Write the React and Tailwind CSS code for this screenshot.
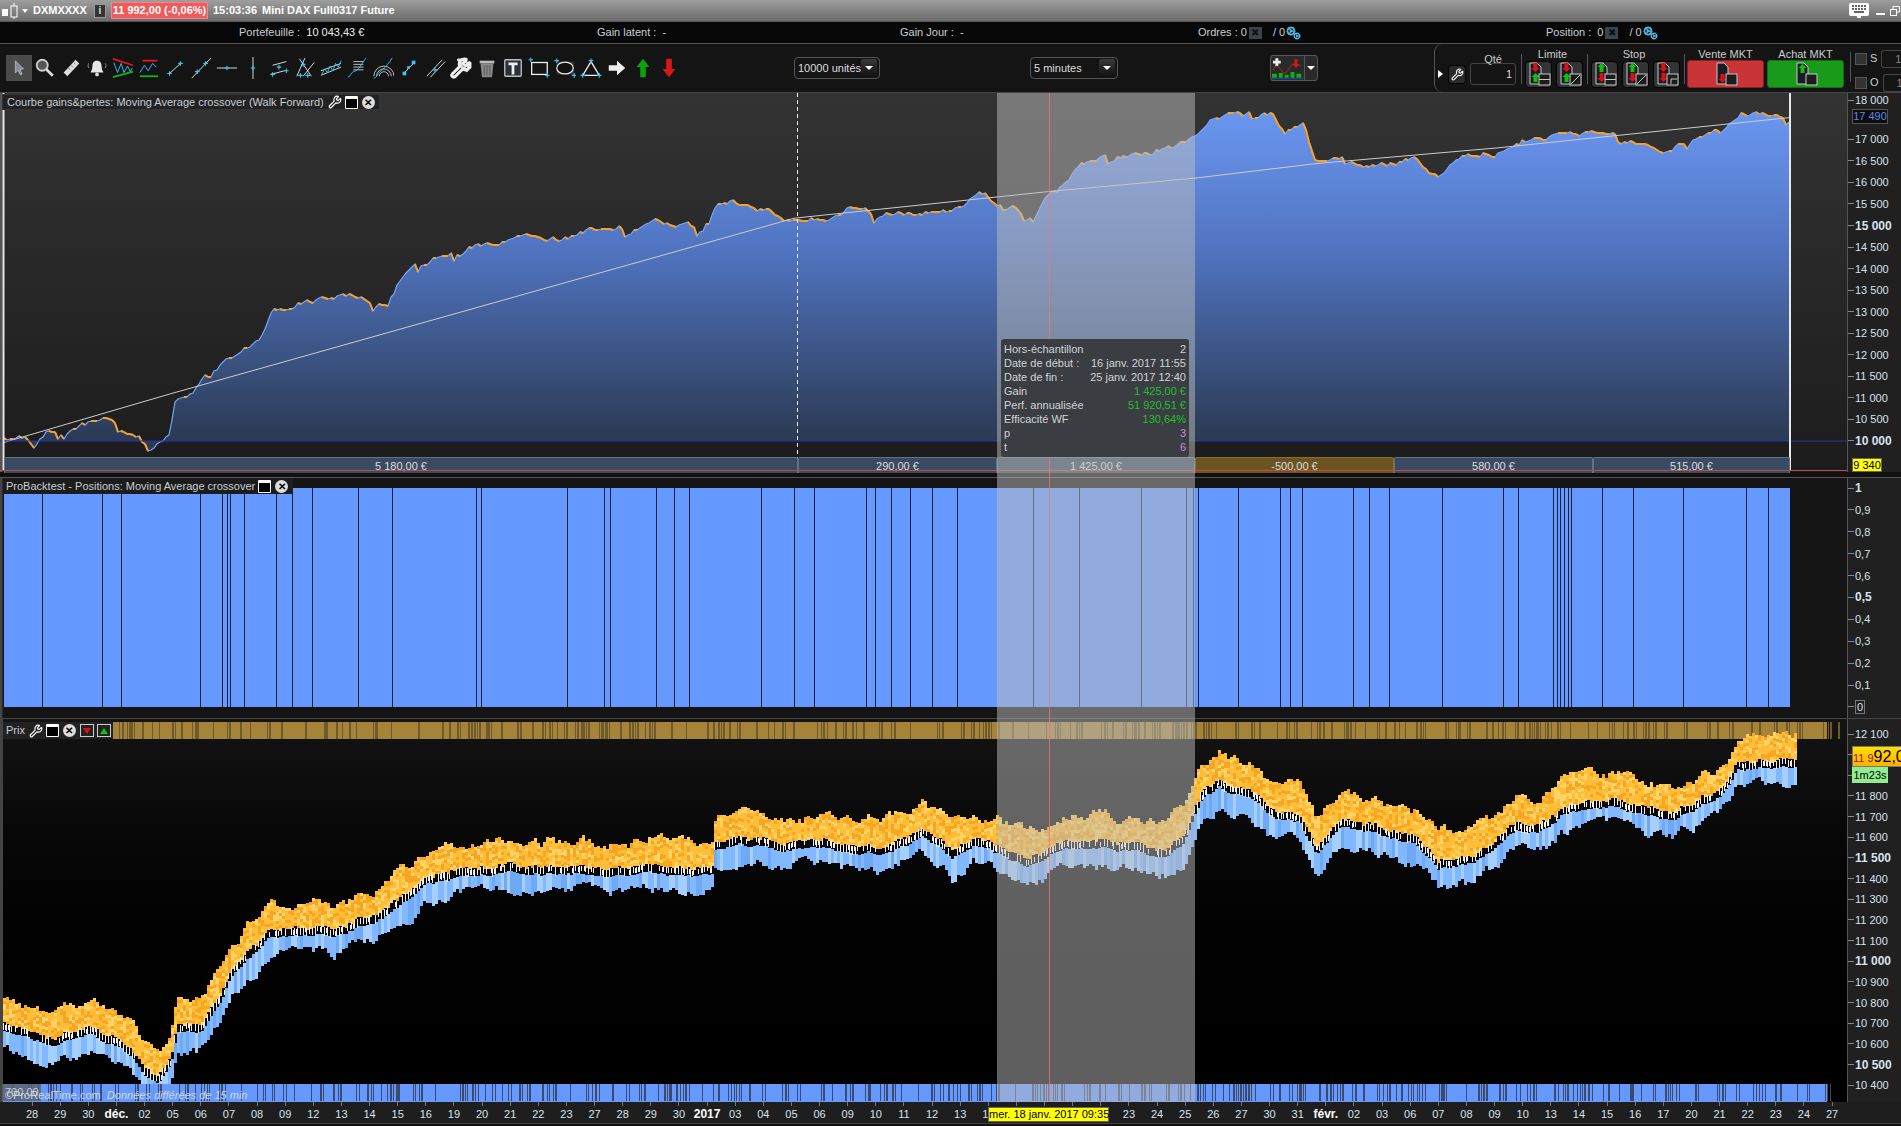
import { Wrench, Hammer, Cog } from "lucide-react";

// points below are read off the picture at 1568px wide, s scales them to the real window
const s = 1901 / 1568;

const rand = (seed) => () => {
  seed = (seed + 0x6d2b79f5) | 0;
  let t = Math.imul(seed ^ (seed >>> 15), 1 | seed);
  t = (t + Math.imul(t ^ (t >>> 7), 61 | t)) ^ t;
  return ((t ^ (t >>> 14)) >>> 0) / 4294967296;
};

const interp = (pts, x) => {
  for (let i = 1; i < pts.length; i++) {
    if (x <= pts[i][0]) {
      const [x0, y0] = pts[i - 1];
      const [x1, y1] = pts[i];
      return y0 + ((y1 - y0) * (x - x0)) / (x1 - x0 || 1);
    }
  }
  return pts[pts.length - 1][1];
};

const equityPts = [[3,363],[20,360],[28,372],[40,358],[60,352],[90,344],[100,348],[110,356],[125,363],[140,358],[145,330],[160,322],[175,303],[195,290],[215,280],[225,256],[250,250],[285,242],[320,249],[330,230],[350,215],[375,207],[400,202],[430,195],[470,196],[480,192],[510,186],[550,185],[580,188],[590,170],[605,163],[620,172],[650,180],[680,180],[700,172],[720,178],[760,175],[790,172],[810,160],[825,168],[840,170],[845,182],[860,165],[875,150],[900,130],[940,128],[985,115],[1000,100],[1020,95],[1050,94],[1060,108],[1075,100],[1085,132],[1110,128],[1125,138],[1165,130],[1185,146],[1205,130],[1235,125],[1255,115],[1300,113],[1325,108],[1375,124],[1395,115],[1420,110],[1435,95],[1475,97]];
const trendPts = [[3,365],[140,325],[655,180],[865,158],[985,147],[1085,135],[1235,122],[1476,97]];
const pricePts = [[3,845],[15,850],[30,852],[45,858],[60,850],[75,846],[90,855],[105,865],[120,880],[130,888],[140,875],[145,845],[165,845],[180,825],[190,800],[205,785],[220,770],[250,765],[275,765],[290,760],[310,752],[330,740],[350,722],[380,718],[420,712],[460,716],[500,716],[540,716],[588,716],[589,695],[610,692],[650,695],[680,692],[700,698],[730,698],[760,685],[785,702],[805,690],[825,700],[845,710],[870,695],[900,692],[935,695],[960,700],[975,690],[990,655],[1005,645],[1030,655],[1050,670],[1070,672],[1085,700],[1105,675],[1130,680],[1165,690],[1185,712],[1215,705],[1250,680],[1270,680],[1290,665],[1330,660],[1380,672],[1400,660],[1420,650],[1432,628],[1480,626]];
const positionLines = [35,84,100,165,183,187,190,201,228,241,257,295,323,393,397,468,498,503,541,556,568,628,655,671,714,722,735,751,769,789,852,890,941,978,984,988,1021,1056,1064,1074,1116,1129,1146,1189,1240,1252,1281,1284,1287,1290,1293,1296,1321,1347,1388,1440,1458];

const equity = (() => {
  const r = rand(7);
  let n = 0;
  const out = [];
  for (let x = 4; x <= 1790; x += 3) {
    n = n * 0.75 + (r() - 0.5) * 5;
    if (r() < 0.04) n += 7;
    out.push([x, Math.round(interp(equityPts, x / s) * s + n - 93)]);
  }
  return out;
})();
const equityLine = equity.map((p) => p.join(",")).join(" ");
const equityArea = `4,348 ${equityLine} 1790,348`;
// the curve is orange only where it falls back
const equityDown = equity
  .map(([x, y], i) => (i && y >= equity[i - 1][1] ? `M${equity[i - 1].join(" ")}L${x} ${y}` : ""))
  .join("");
const trendLine = trendPts.map(([x, y]) => `${x * s},${y * s - 93}`).join(" ");

const price = (() => {
  const r = rand(21);
  const d = { o1: "", o2: "", o3: "", b1: "", b2: "", b3: "", k: "", w: "" };
  const box = (x, y, w, h) => `M${x} ${Math.round(y)}h${w}v${Math.round(h)}h-${w}z`;
  let n = 0;
  let top = 0;
  let low = 0;
  for (let x = 3; x < 1795; x += 3) {
    n = n * 0.8 + (r() - 0.5) * 3;
    top = top * 0.78 + (r() - 0.5) * 8;
    low = low * 0.78 + (r() - 0.5) * 8;
    const c = interp(pricePts, x / s) * s + n - 718;
    const oh = 22 + top;
    // orange body dithered in 3px cells
    for (let y = c - 5 - oh; y < c - 3; y += 3) {
      const k = r();
      d[k < 0.45 ? "o1" : k < 0.75 ? "o2" : "o3"] += box(x, y, 3, 3);
    }
    d.k += box(x, c - 4, 3, 11);
    if (r() < 0.7) d.w += box(x, c - 3 + r() * 2, 1, 6 + r() * 3);
    if (r() < 0.4) d.w += box(x + 2, c - 2 + r() * 2, 1, 5);
    const k = r();
    d[k < 0.5 ? "b1" : k < 0.8 ? "b2" : "b3"] += box(x, c + 6, 3, 18 + low);
  }
  return d;
})();

const stripes = (seed, count) => {
  const r = rand(seed);
  let d = "";
  let x = 4;
  for (let i = 0; i < count && x < 1827; i++) {
    x += 2 + r() * r() * 26;
    d += `M${x.toFixed(1)} 0v17`;
    if (r() < 0.4) d += `M${(x + 2.5).toFixed(1)} 0v17`;
  }
  return d;
};

const Cross = ({ x, y }) => (
  <path d={`M${x - 2.5} ${y}h5M${x} ${y - 2.5}v5`} stroke="#38c4f8" strokeWidth="1.2" fill="none" />
);
const Line = ({ d, c = "#e8e8e8", w = 1 }) => <path d={d} stroke={c} strokeWidth={w} fill="none" />;

const toolIcons = [
  <path d="M8 4l9 9-4 .5 2.5 5-2 1-2.5-5-3 3z" fill="#8a8e98" stroke="#ddd" strokeWidth=".6" />,
  <g><circle cx="9" cy="9" r="6" fill="#555" stroke="#ccc" strokeWidth="2" /><Line d="M13.5 13.5l7 7" c="#ddd" w="3" /></g>,
  <g><path d="M4 17L17 3l4 4L8 21z" fill="#ddd" /><Line d="M9 12l2 2M12 9l2 2M15 6l2 2" c="#777" /></g>,
  <g><path d="M12 4c-4 0-5 3-5 6 0 4-2 6-2 7h14c0-1-2-3-2-7 0-3-1-6-5-6z" fill="#e6e6e6" /><circle cx="12" cy="19" r="2" fill="#ddd" /><Line d="M3 7c-1 2-1 3 0 5M21 7c1 2 1 3 0 5" c="#999" /></g>,
  <g><Line d="M1 2l22 7" c="#e01818" w="2" /><Line d="M1 22l22-6" c="#16b016" w="2" /><Line d="M2 6l4 11 4-10 3 10 4-7 3 6 2-4" c="#38c4f8" /></g>,
  <g><Line d="M5 4h16" c="#e01818" w="2" /><Line d="M2 21h20" c="#16b016" w="2" /><Line d="M2 17l5-8 4 6 5-8 4 4" c="#38c4f8" /></g>,
  <g><Line d="M6 18L18 7" /><Cross x={6} y={18} /><Cross x={18} y={7} /></g>,
  <g><Line d="M2 23L23 1" /><Cross x={8} y={16} /><Cross x={17} y={7} /></g>,
  <g><Line d="M1 12h22" /><Cross x={12} y={12} /></g>,
  <g><Line d="M12 0v24" /><Cross x={12} y={12} /></g>,
  <g><Line d="M5 9l15-4M3 19l15-4" /><Cross x={5} y={19} /><Cross x={12} y={11} /><Cross x={20} y={15} /></g>,
  <g><Line d="M6 2l13 19M12 1l-9 20M22 6L10 21" /><Cross x={7} y={20} /><Cross x={15} y={20} /><Cross x={10} y={8} /></g>,
  <g><Line d="M1 15L23 7M1 20L23 11" /><Line d="M2 19l3-6 3 4 3-7 3 5 3-8 3 4 3-7" c="#38c4f8" /></g>,
  <g><Line d="M8 5h11M8 8h11M8 11h11M8 14h11" c="#ccc" /><Line d="M2 22c3 0 3-5 6-6s5-2 7-5 5-8 7-10" c="#38c4f8" /></g>,
  <g><Line d="M5 21a8 8 0 0 1 16 0M8 21a5 5 0 0 1 10 0M2 21a11 11 0 0 1 22 0" c="#ccc" /><Line d="M2 23c3 0 5-6 9-9s8-8 11-13" c="#38c4f8" /></g>,
  <g><Line d="M6 18L18 6" c="#ddd" /><rect x="15" y="4" width="4" height="4" fill="#38c4f8" /><rect x="5" y="16" width="4" height="4" fill="#38c4f8" /><rect x="10" y="10" width="3" height="3" fill="#38c4f8" /></g>,
  <g><Line d="M3 21L20 3M7 22L23 5" /><Cross x={12} y={14} /></g>,
  <g><Hammer x="0" y="0" width="24" height="24" color="#ddd" strokeWidth="3" /><Wrench x="0" y="0" width="24" height="24" color="#eee" strokeWidth="3" /></g>,
  <g><path d="M5 7h14l-1.5 15h-11z" fill="#888" /><path d="M4 4h16v3H4z" fill="#bbb" /><Line d="M9 9v11M12 9v11M15 9v11" c="#555" /></g>,
  <g><rect x="3" y="3" width="18" height="18" rx="1" fill="#2a3038" stroke="#bbb" strokeWidth="1.5" /><path d="M7 6h10v3h-3.5v10h-3V9H7z" fill="#eee" /></g>,
  <g><rect x="4" y="6" width="17" height="13" fill="none" stroke="#eee" strokeWidth="1.4" /><Cross x={3} y={3} /><Cross x={21} y={20} /></g>,
  <g><rect x="3" y="5" width="19" height="14" fill="#333" /><ellipse cx="12" cy="12" rx="9" ry="6.5" fill="#111" stroke="#eee" strokeWidth="1.3" /><Cross x={3} y={4} /><Cross x={22} y={20} /></g>,
  <g><path d="M12 5L3 20h18z" fill="none" stroke="#eee" strokeWidth="1.4" /><Cross x={12} y={4} /><Cross x={3} y={20} /><Cross x={21} y={20} /></g>,
  <path d="M3 9h9V4l9 8-9 8v-5H3z" fill="#eee" />,
  <path d="M12 2l7 9h-4v11H9V11H5z" fill="#0aa40a" />,
  <path d="M12 22l7-9h-4V2H9v11H5z" fill="#d81818" />,
];

const DocIcon = ({ arrows, mark }) => (
  <svg width="24" height="24" viewBox="0 0 24 24">
    <path d="M3 1h7l4 4v17H3z" fill="#181c24" stroke="#c8c8c8" />
    {arrows.map(([up, y], i) => (
      <path
        key={i}
        transform={`translate(3.500 ${y})`}
        d={up ? "M5 0l4 4H7v5H3V4H1z" : "M5 9l4-4H7V0H3v5H1z"}
        fill={up ? "#10c010" : "#e01010"}
      />
    ))}
    {mark && <rect x="12" y="12" width="11" height="11" fill="#1c1c1c" stroke="#c8c8c8" />}
    {mark === "lines" && <path d="M12 17.5h11" stroke="#c8c8c8" />}
    {mark === "slash" && <path d="M13 22l9-9" stroke="#c8c8c8" />}
    {mark === "corner" && <path d="M16 22v-5h6" stroke="#c8c8c8" fill="none" />}
  </svg>
);

const OrderBtn = ({ arrows, mark, cls = "ml-[4px]" }) => (
  <div className={`w-[27px] h-[27px] shrink-0 rounded-[4px] bg-[#333] border border-black flex items-center justify-center ${cls}`}>
    <DocIcon arrows={arrows} mark={mark} />
  </div>
);

const Sep = ({ cls }) => <div className={`w-px h-[30px] shrink-0 bg-[#555] ${cls}`} />;

const Select = ({ label, cls }) => (
  <div className={`h-[22px] shrink-0 rounded-[4px] border border-[#555] flex items-center justify-between pl-[3px] pr-[2px] text-[11px] text-[#ddd] whitespace-nowrap ${cls}`}>
    {label}
    <span className="w-[16px] h-[18px] rounded-[2px] bg-linear-to-b from-[#3a3a3a] to-[#111] flex items-center justify-center">
      <span className="w-0 h-0 border-x-[4px] border-x-transparent border-t-[4px] border-t-white" />
    </span>
  </div>
);

const Counter = () => (
  <span className="inline-flex items-center">
    <span className="w-[13px] h-[12px] bg-[#3a444c] text-[#111] text-[10px] leading-[12px] text-center ml-[2px] mr-[11px]">✖</span>
    / 0
    <span className="relative w-[16px] h-[14px] ml-[1px] text-[#5ab8e8]">
      <Cog size={10} strokeWidth={3} className="absolute left-0 top-0" />
      <Cog size={8} strokeWidth={3} className="absolute left-[7px] top-[6px]" />
    </span>
  </span>
);

const AxisRow = ({ label, bold, gap }) => (
  <div className={`flex items-center h-[14px] ${gap}`}>
    <div className="w-[6px] h-px bg-[#888]" />
    <span className={`ml-[1px] leading-[14px] text-[#d8e2ee] whitespace-nowrap ${bold ? "text-[12px] font-bold" : "text-[11px]"}`}>{label}</span>
  </div>
);

// 17 500, 12 000 and 11 900 sit under the value boxes in the reference
const equityLabels = ["17 000","16 500","16 000","15 500","15 000","14 500","14 000","13 500","13 000","12 500","12 000","11 500","11 000","10 500","10 000"];
const positionLabels = ["1","0,9","0,8","0,7","0,6","0,5","0,4","0,3","0,2","0,1"];
const priceLabels = ["12 100","","","11 800","11 700","11 600","11 500","11 400","11 300","11 200","11 100","11 000","10 900","10 800","10 700","10 600","10 500","10 400"];

// the yellow date box covers 17 to 20 in the reference, those cells stay empty
const dates = ["28","29","30","déc.","02","05","06","07","08","09","12","13","14","15","16","19","20","21","22","23","27","28","29","30","2017","03","04","05","06","09","10","11","12","13","16","","","","","23","24","25","26","27","30","31","févr.","02","03","06","07","08","09","10","13","14","15","16","17","20","21","22","23","24","27"];

const segments = [
  { w: 794, t: "5 180,00 €" },
  { w: 199, t: "290,00 €" },
  { w: 198, t: "1 425,00 €" },
  { w: 199, t: "-500,00 €", loss: true },
  { w: 199, t: "580,00 €" },
  { w: 197, t: "515,00 €" },
];

const tipRows = [
  ["Hors-échantillon", "2", "text-[#d0d4d8]"],
  ["Date de début :", "16 janv. 2017 11:55", "text-[#d0d4d8]"],
  ["Date de fin :", "25 janv. 2017 12:40", "text-[#d0d4d8]"],
  ["Gain", "1 425,00 €", "text-[#22c030]"],
  ["Perf. annualisée", "51 920,51 €", "text-[#22c030]"],
  ["Efficacité WF", "130,64%", "text-[#22c030]"],
  ["p", "3", "text-[#d088d8]"],
  ["t", "6", "text-[#d088d8]"],
];

const WinBtns = ({ close = true, wrench = false }) => (
  <>
    {wrench && <Wrench size={14} className="text-white ml-[4px]" />}
    <span className="w-[13px] h-[13px] ml-[3px] bg-black border border-white border-t-[3px] rounded-[1px]" />
    {close && (
      <span className="w-[13px] h-[13px] ml-[4px] rounded-full bg-[#ddd] text-black text-[10px] leading-[13px] text-center font-bold">✕</span>
    )}
  </>
);

export default function App() {
  return (
    <div className="w-[1901px] h-[1126px] overflow-hidden bg-[#111] flex flex-col font-['Liberation_Sans',Arial,sans-serif] text-[11px] text-[#ddd]">
      {/* title bar */}
      <div className="h-[22px] shrink-0 flex items-center bg-linear-to-b from-[#9e9e9e] to-[#6c6c6c] border-b border-[#555] text-white font-bold">
        <svg width="18" height="16" viewBox="0 0 18 16" className="ml-[2px]">
          <rect x="0" y="6" width="6" height="7" fill="#fff" />
          <rect x="9" y="3" width="6" height="11" fill="none" stroke="#fff" />
          <path d="M12 0v3M12 14v2" stroke="#fff" />
        </svg>
        <span className="w-0 h-0 ml-[2px] border-x-[3.5px] border-x-transparent border-t-[4px] border-t-white" />
        <span className="ml-[5px] w-[52px]">DXMXXXX</span>
        <span className="ml-[9px] w-[12px] h-[14px] bg-[#333] border border-[#999] text-[10px] leading-[12px] text-center text-[#ddd]">i</span>
        <span className="ml-[5px] w-[97px] h-[17px] bg-[#f05a5a] border border-[#e88] text-center leading-[15px]">11 992,00 (-0,06%)</span>
        <span className="ml-[5px]">15:03:36</span>
        <span className="ml-[5px]">Mini DAX Full0317 Future</span>
        <div className="ml-auto flex items-center">
          <svg width="20" height="15" viewBox="0 0 20 15">
            <rect width="20" height="13" rx="2" fill="#fff" />
            <path d="M3 3h2M6 3h2M9 3h2M12 3h2M15 3h2M3 6h2M6 6h2M9 6h2M12 6h2M15 6h2M5 9h10" stroke="#333" strokeWidth="1.5" />
            <path d="M8 13h4v2H8z" fill="#fff" />
          </svg>
          <span className="ml-[7px] mt-[6px] w-[9px] h-[2px] bg-white" />
          <svg width="10" height="10" viewBox="0 0 10 10" className="ml-[5px] mr-[1px]">
            <path d="M3 3V.5h6.5V6H7" fill="none" stroke="#fff" />
            <rect x=".5" y="3.5" width="6" height="6" fill="none" stroke="#fff" />
          </svg>
        </div>
      </div>

      {/* account row */}
      <div className="h-[22px] shrink-0 flex items-center bg-[#080808] border-b border-[#555] text-[#c8ced4]">
        <span className="ml-[239px] w-[358px]">Portefeuille :&nbsp; <span className="text-[#eee]">10 043,43 €</span></span>
        <span className="w-[303px]">Gain latent :&nbsp; -</span>
        <span className="w-[298px]">Gain Jour :&nbsp; -</span>
        <span className="w-[348px] flex items-center">Ordres :&nbsp;0<Counter /></span>
        <span className="flex items-center">Position :&nbsp; 0<Counter /></span>
      </div>

      {/* toolbar */}
      <div className="h-[49px] shrink-0 flex items-center bg-[#141414] border-b border-[#444]">
        <div className="ml-[6px] flex items-center shrink-0">
          {toolIcons.map((icon, i) => (
            <div key={i} className={`w-[26px] h-[26px] flex items-center justify-center ${i === 0 ? "bg-[#4a4a4a]" : ""}`}>
              <svg width="22" height="22" viewBox="0 0 24 24">{icon}</svg>
            </div>
          ))}
        </div>
        <Select label="10000 unités" cls="ml-[112px] w-[86px]" />
        <Select label="5 minutes" cls="ml-[150px] w-[88px]" />
        <div className="ml-[152px] h-[26px] w-[48px] shrink-0 rounded-[3px] bg-[#2a2a2a] border border-[#555] flex items-center">
          <svg width="34" height="24" viewBox="0 0 34 24">
            <path d="M6 2v8M2 6h8" stroke="#eee" strokeWidth="3" />
            <path d="M2 14c6-12 9 8 14 2s6-12 14-6" fill="none" stroke="#a03030" />
            <path d="M1 18h5v4H1zM8 17h4v5H8zM14 19h4v3h-4zM20 16h4v6h-4zM26 18h5v4h-5z" fill="#10b010" />
            <path d="M24 3h3v5h2l-3.500 4-3.500-4h2z" fill="#e01010" />
            <path d="M1 23h32" stroke="#2040e0" />
          </svg>
          <span className="ml-auto w-[13px] h-full border-l border-[#555] flex items-center justify-center">
            <span className="w-0 h-0 border-x-[4px] border-x-transparent border-t-[4px] border-t-white" />
          </span>
        </div>
        <div className="ml-[116px] h-full w-[412px] shrink-0 flex items-center border-l border-[#555] rounded-l-[8px] pt-[12px] relative">
          <span className="w-0 h-0 ml-[3px] border-y-[4px] border-y-transparent border-l-[5px] border-l-white" />
          <div className="ml-[5px] w-[18px] h-[19px] rounded-[3px] bg-[#2a2a2a] border border-black flex items-center justify-center">
            <Wrench size={13} className="text-white" />
          </div>
          <div className="ml-[4px] relative w-[46px] h-[22px] rounded-[3px] border border-[#444] text-right pr-[3px] leading-[20px]">
            1
            <span className="absolute left-0 right-0 -top-[15px] text-center text-[11px] text-[#ccc]">Qté</span>
          </div>
          <Sep cls="ml-[5px] -mt-[10px]" />
          <div className="relative flex">
            <span className="absolute left-0 right-0 -top-[15px] text-center text-[#ccc]">Limite</span>
            <OrderBtn cls="ml-[3px]" arrows={[[false, 1], [true, 11]]} mark="lines" />
            <OrderBtn arrows={[[false, 1], [true, 11]]} mark="slash" />
          </div>
          <Sep cls="ml-[4px] -mt-[10px]" />
          <div className="relative flex">
            <span className="absolute left-0 right-0 -top-[15px] text-center text-[#ccc]">Stop</span>
            <OrderBtn cls="ml-[3px]" arrows={[[true, 1], [false, 11]]} mark="lines" />
            <OrderBtn arrows={[[true, 1], [false, 11]]} mark="slash" />
            <OrderBtn arrows={[[false, 1], [false, 11]]} mark="corner" />
          </div>
          <Sep cls="ml-[4px] -mt-[10px]" />
          <div className="relative ml-[2px] w-[77px] h-[28px] rounded-[3px] bg-[#c83438] border border-[#8a2020] flex items-center justify-center">
            <span className="absolute left-0 right-0 -top-[15px] text-center text-[#ccc]">Vente MKT</span>
            <DocIcon arrows={[[false, 12]]} mark="plain" />
          </div>
          <div className="relative ml-[3px] w-[77px] h-[28px] rounded-[3px] bg-[#1a9a1a] border border-[#107010] flex items-center justify-center">
            <span className="absolute left-0 right-0 -top-[15px] text-center text-[#ccc]">Achat MKT</span>
            <DocIcon arrows={[[true, 2]]} mark="plain" />
          </div>
        </div>
        <div className="flex-1 flex h-full">
          <Sep cls="ml-[4px] mt-[8px]" />
          <div className="ml-[4px] flex flex-col gap-[9px] pt-[7px] text-[#ccc]">
            {["S", "O"].map((t) => (
              <div key={t} className="flex items-center h-[15px]">
                <span className="w-[12px] h-[12px] bg-[#333] border border-[#555]" />
                <span className="ml-[3px] mr-[4px]">{t}</span>
                <span className="w-[20px] h-[18px] border border-[#444] rounded-l-[3px] border-r-0 text-right leading-[16px] text-[#888]">1</span>
              </div>
            ))}
          </div>
        </div>
      </div>

      <div className="relative h-[1009px] shrink-0">
        {/* equity curve */}
        <div className="h-[379px] flex">
          <div className="relative w-[1847px] h-full bg-linear-to-b from-[#333] to-[#1c1c1c]">
            <svg width="1847" height="379" className="block">
              <defs>
                <linearGradient id="area" x1="0" y1="0" x2="0" y2="348" gradientUnits="userSpaceOnUse">
                  <stop offset="0" stopColor="#6e9bf7" />
                  <stop offset="0.45" stopColor="#5074c0" />
                  <stop offset="1" stopColor="#2b3a52" />
                </linearGradient>
              </defs>
              <rect x="0" y="0" width="2.500" height="379" fill="#555" />
              <polygon points={equityArea} fill="url(#area)" />
              <polyline points={equityLine} fill="none" stroke="#7aa6f8" strokeWidth="1.200" />
              <path d={equityDown} fill="none" stroke="#f7a128" strokeWidth="2" />
              <polyline points={trendLine} fill="none" stroke="#ccc" strokeWidth="1" />
              <path d="M0 348H1847" stroke="#2a32b0" />
              <path d="M797.500 0V379" stroke="#eee" strokeDasharray="4 3" />
              <path d="M3.500 0V378M1790 0V378" stroke="#e8e8e8" strokeWidth="2" />
            </svg>
            <div className="absolute left-[4px] top-[364px] h-[16px] flex">
              {segments.map((seg) => (
                <div
                  key={seg.t}
                  style={{ width: seg.w }}
                  className={`h-full text-center leading-[17px] border-t border-x rounded-t-[2px] ${seg.loss ? "bg-[#6a5520] border-[#8a7030]" : "bg-[#3a4a60] border-[#5c7488]"}`}
                >
                  {seg.t}
                </div>
              ))}
            </div>
            <div className="absolute left-0 right-0 top-[377px] h-px bg-[#c84848]" />
            <div className="absolute left-[2px] top-[1px] h-[16px] w-[378px] bg-[#222] border border-[#333] flex items-center pl-[4px] text-[#c8ced4]">
              Courbe gains&amp;pertes: Moving Average crossover (Walk Forward)
              <WinBtns wrench />
            </div>
          </div>
          <div className="relative flex-1 bg-[#202020] border-l border-[#555]">
            <AxisRow label="18 000" gap="mb-[25.4px]" />
            {equityLabels.map((l) => (
              <AxisRow key={l} label={l} bold={l === "15 000" || l === "10 000"} gap="mb-[7.54px]" />
            ))}
            <div className="absolute left-[4px] top-[16px] w-[36px] h-[15px] bg-[#0c0c0c] border border-[#555] text-center leading-[13px] text-[#5a8cf0] whitespace-nowrap">17 490</div>
            <div className="absolute left-[4px] top-[365px] w-[30px] h-[14px] bg-[#ffff00] border border-[#666] text-center leading-[12px] text-black whitespace-nowrap">9 340</div>
          </div>
        </div>

        <div className="h-[5px] bg-[#111]" />

        {/* positions */}
        <div className="h-[241px] flex border-t border-[#555]">
          <div className="relative w-[1847px] h-full bg-[#141414]">
            <svg width="1847" height="240" className="block">
              <rect x="0" y="0" width="2.500" height="240" fill="#444" />
              <rect x="4" y="10" width="1786" height="219" fill="#6699ff" />
              {positionLines.map((x) => (
                <path key={x} d={`M${Math.round(x * s) + 0.5} 10v219`} stroke="#16223c" />
              ))}
            </svg>
            <div className="absolute left-[3px] top-0 h-[16px] w-[290px] bg-[#1c1c1c] flex items-center pl-[3px] text-[#c8ced4]">
              ProBacktest - Positions: Moving Average crossover
              <WinBtns />
            </div>
          </div>
          <div className="flex-1 bg-[#202020] border-l border-[#555] pt-[3px]">
            {positionLabels.map((l) => (
              <AxisRow key={l} label={l} bold={l === "1" || l === "0,5"} gap="mb-[7.9px]" />
            ))}
            <div className="flex items-center h-[14px]">
              <div className="w-[6px] h-px bg-[#888]" />
              <span className="ml-[1px] w-[10px] h-[14px] border border-[#777] text-center leading-[12px] text-[#d8e2ee]">0</span>
            </div>
          </div>
        </div>

        {/* price */}
        <div className="h-[384px] flex border-t border-[#444]">
          <div className="relative w-[1847px] h-full bg-linear-to-b from-[#141414] to-[#000]">
            <svg width="1847" height="383" className="block" shapeRendering="crispEdges">
              <rect x="0" y="0" width="2.500" height="383" fill="#444" />
              <rect x="113" y="3" width="1714" height="17" fill="#a5843a" />
              <path d={stripes(3, 420)} transform="translate(113 3)" stroke="#6e5a2a" strokeWidth="1.500" />
              <path d={price.k} fill="#080808" />
              <path d={price.b1} fill="#82b8ff" />
              <path d={price.b2} fill="#a4cfff" />
              <path d={price.b3} fill="#6fa8f4" />
              <path d={price.o1} fill="#ffbd38" />
              <path d={price.o2} fill="#f6a623" />
              <path d={price.o3} fill="#ffd366" />
              <path d={price.w} fill="#f4f4f4" />
              <rect x="3" y="365" width="1824" height="18" fill="#6699ff" />
              <path d={stripes(11, 420)} transform="translate(0 365)" stroke="#3c4a6e" strokeWidth="1.200" />
            </svg>
            <div className="absolute left-[3px] top-[3px] h-[17px] w-[110px] bg-[#222] flex items-center pl-[3px] text-[#c8ced4]">
              Prix
              <WinBtns wrench />
              <span className="ml-[4px] w-[14px] h-[13px] bg-[#222] border border-[#ccc] flex items-center justify-center">
                <span className="w-0 h-0 border-x-[4px] border-x-transparent border-t-[6px] border-t-[#e01010]" />
              </span>
              <span className="ml-[3px] w-[14px] h-[13px] bg-[#222] border border-[#ccc] flex items-center justify-center">
                <span className="w-0 h-0 border-x-[4px] border-x-transparent border-b-[6px] border-b-[#10c010]" />
              </span>
            </div>
            <div className="absolute left-[2px] top-[365px] w-[39px] h-[17px] bg-[#5a5f68]/80 text-[#c8d0dc] pl-[3px] leading-[17px]">700,00</div>
            <div className="absolute left-[5px] top-[368px] text-[#d0d8e4] whitespace-nowrap">
              ©ProRealTime.com&nbsp; <span className="italic">Données différées de 15 min</span>
            </div>
          </div>
          <div className="relative flex-1 bg-[#202020] border-l border-[#555] pt-[8px]">
            {priceLabels.map((l, i) => (
              <AxisRow key={i} label={l} bold={l === "11 500" || l === "11 000" || l === "10 500"} gap="mb-[6.67px]" />
            ))}
            <div className="absolute left-[4px] top-[27px] w-[50px] h-[21px] overflow-hidden bg-linear-to-b from-[#ffe000] to-[#ffb000] border border-[#777] text-[#a01000] leading-[19px] whitespace-nowrap">
              11 9<span className="text-[16px] text-black">92,0</span>
            </div>
            <div className="absolute left-[4px] top-[48px] w-[36px] h-[16px] bg-[#90ee90] text-center leading-[16px] text-black">1m23s</div>
          </div>
        </div>

        {/* sample window across the three panels */}
        <div className="absolute left-[997px] w-[198px] top-0 bottom-0 bg-[#bebebe]/50" />
        <div className="absolute left-[1049px] w-px top-0 bottom-0 bg-[#ff7070]/70" />
        <div className="absolute left-[1001px] top-[246px] w-[188px] h-[118px] rounded-[3px] bg-[#3a3d42] px-[3px] pt-[3px]">
          {tipRows.map(([k, v, c]) => (
            <div key={k} className="flex justify-between h-[14px] leading-[14px] text-[#d0d4d8]">
              <span>{k}</span>
              <span className={c}>{v}</span>
            </div>
          ))}
        </div>
      </div>

      {/* time axis */}
      <div className="relative h-[21px] shrink-0 flex pl-[18px] bg-[#1e1e1e]">
        {dates.map((d, i) => {
          const big = d === "déc." || d === "2017" || d === "févr.";
          return (
            <div key={i} className="w-[28.13px] shrink-0 flex flex-col items-center">
              <div className="w-px h-[4px] bg-[#777]" />
              <span className={big ? "text-[12px] leading-[16px] font-bold text-white" : "text-[11px] leading-[16px] text-[#d8e2ee]"}>{d}</span>
            </div>
          );
        })}
        <div className="absolute left-[988px] top-[5px] w-[121px] h-[15px] bg-[#ffff00] border border-[#666] text-center leading-[13px] text-black whitespace-nowrap">
          mer. 18 janv. 2017 09:35
        </div>
      </div>
      <div className="flex-1 bg-[#111] border-t border-[#444]" />
    </div>
  );
}
